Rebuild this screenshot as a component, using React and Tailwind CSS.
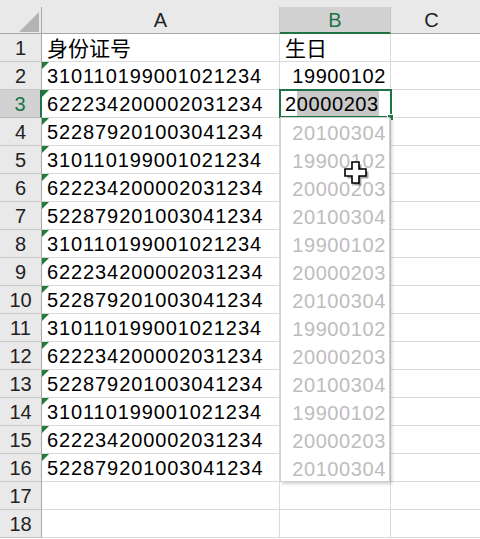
import React from "react";

const ids = [
  "310110199001021234",
  "622234200002031234",
  "522879201003041234",
];
const births = ["19900102", "20000203", "20100304"];

// rows 2..16 cycle through the three sample ids
const rows = Array.from({ length: 15 }, (_, i) => ({
  id: ids[i % 3],
  birth: births[i % 3],
}));

const font = { fontFamily: '"Liberation Sans", "Noto Sans CJK SC", sans-serif' };

const RowHead = ({ n, active }) => (
  <div
    className={`w-[42px] shrink-0 flex items-center justify-center text-[20px] border-b ${
      active
        ? "bg-[#d2d2d2] text-[#217346] border-b-[#bdbdbd] border-r-2 border-r-[#217346]"
        : "bg-[#e9e9e9] text-[#222] border-b-[#c8c8c8] border-r border-r-[#a8a8a8]"
    }`}
  >
    {n}
  </div>
);

const ErrorMark = () => (
  <div className="absolute left-0 top-0 w-0 h-0 border-t-[7px] border-r-[7px] border-t-[#1e7a3c] border-r-transparent" />
);

const MoveCursor = () => (
  <svg
    className="absolute left-[343px] top-[160px] z-20 pointer-events-none"
    width="26"
    height="26"
    viewBox="0 0 26 26"
  >
    <path
      d="M10 3h7v7h7v7h-7v7h-7v-7H3v-7h7z"
      fill="#000"
      opacity="0.35"
      transform="translate(1.5 1.5)"
    />
    <path
      d="M9 2h7v7h7v7h-7v7H9v-7H2V9h7z"
      fill="#fff"
      stroke="#000"
      strokeWidth="1.6"
      strokeLinejoin="miter"
    />
  </svg>
);

export default function App() {
  return (
    <div className="relative w-[480px] h-[539px] overflow-hidden bg-white" style={font}>
      {/* strip above the column headers */}
      <div className="h-[7px] bg-[#e9e9e9]" />

      {/* column headers */}
      <div className="flex h-[27px] bg-[#e9e9e9] text-[20px] text-[#222] border-b border-[#a8a8a8]">
        <div className="relative w-[42px] shrink-0 border-r border-[#a8a8a8]">
          <svg className="absolute left-[19px] top-[5px]" width="20" height="20" viewBox="0 0 20 20">
            <path d="M20 0V20H0Z" fill="#b4b4b4" />
          </svg>
        </div>
        <div className="w-[238px] shrink-0 flex items-center justify-center border-r border-[#c8c8c8]">
          A
        </div>
        <div className="w-[111px] shrink-0 flex items-center justify-center bg-[#d2d2d2] text-[#217346] border-r border-[#c8c8c8] border-b-2 border-b-[#217346] -mb-px">
          B
        </div>
        <div className="flex-1 flex items-center justify-center pr-[8px]">C</div>
      </div>

      {/* row 1: headings */}
      <div className="flex h-[28px]">
        <RowHead n={1} />
        <div className="w-[238px] shrink-0 flex items-center pl-[5px] pt-[2px] text-[21px] text-black border-r border-b border-[#dadada]">
          身份证号
        </div>
        <div className="w-[111px] shrink-0 flex items-center pl-[5px] pt-[2px] text-[21px] text-black border-r border-b border-[#dadada]">
          生日
        </div>
        <div className="flex-1 border-b border-[#dadada]" />
      </div>

      {rows.map((r, i) => {
        const n = i + 2;
        const active = n === 3;
        return (
          <div key={n} className="flex h-[28px]">
            <RowHead n={n} active={active} />
            <div className="relative w-[238px] shrink-0 flex items-center pl-[5px] pt-[1px] text-[20px] tracking-[0.9px] text-black border-r border-b border-[#dadada]">
              <ErrorMark />
              {r.id}
            </div>
            <div className="relative w-[111px] shrink-0 flex items-center border-r border-b border-[#dadada] text-[20px] tracking-[0.6px]">
              {n === 2 && <span className="ml-auto pr-[4px] pt-[1px] text-black">{r.birth}</span>}
              {active && (
                <>
                  <span className="pl-[5px] pt-[1px] text-black">
                    2<span className="bg-[#c8c8c8] py-[2px]">0000203</span>
                  </span>
                  <div className="absolute -left-[1px] -top-[1px] w-[113px] h-[29px] border-2 border-[#217346]" />
                  <div className="absolute right-[-4px] bottom-[-4px] w-[7px] h-[7px] bg-[#217346] border border-white" />
                </>
              )}
              {n === 4 && (
                // flash fill preview list
                <div className="absolute left-0 top-[-1px] w-[110px] h-[365px] bg-white border border-[#d0d0d0] shadow-[2px_2px_3px_rgba(0,0,0,0.18)] z-10 flex flex-col">
                  {rows.slice(2).map((p, k) => (
                    <div key={k} className="h-[28px] shrink-0 flex items-center justify-end pr-[3px] pt-[2px] text-[#bdbdbd]">
                      {p.birth}
                    </div>
                  ))}
                </div>
              )}
            </div>
            <div className="flex-1 border-b border-[#dadada]" />
          </div>
        );
      })}

      {[17, 18].map((n) => (
        <div key={n} className="flex h-[28px]">
          <RowHead n={n} />
          <div className="w-[238px] shrink-0 border-r border-b border-[#dadada]" />
          <div className="w-[111px] shrink-0 border-r border-b border-[#dadada]" />
          <div className="flex-1 border-b border-[#dadada]" />
        </div>
      ))}

      <MoveCursor />
    </div>
  );
}
